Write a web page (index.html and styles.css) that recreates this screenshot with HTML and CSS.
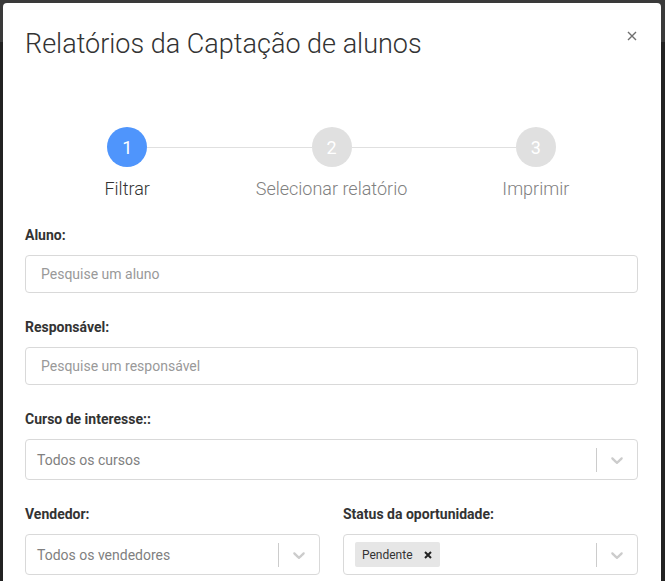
FILE: index.html
```html
<!DOCTYPE html>
<html lang="pt-BR">
<head>
<meta charset="utf-8">
<title>Relatórios da Captação de alunos</title>
<link rel="stylesheet" href="styles.css">
</head>
<body>
<div class="modal">
  <div class="modal-header">
    <h1 class="modal-title">Relatórios da Captação de alunos</h1>
    <button class="close" aria-label="Fechar">
      <svg width="10" height="10" viewBox="0 0 10 10"><path d="M1 1L9 9M9 1L1 9" stroke="#6f6f6f" stroke-width="1.4" fill="none"/></svg>
    </button>
  </div>

  <div class="stepper">
    <div class="step-track">
      <span class="circle active">1</span>
      <span class="line"></span>
      <span class="circle">2</span>
      <span class="line"></span>
      <span class="circle">3</span>
    </div>
    <div class="step-labels">
      <span class="step-label active">Filtrar</span>
      <span class="step-label">Selecionar relatório</span>
      <span class="step-label">Imprimir</span>
    </div>
  </div>

  <form class="form">
    <div class="group">
      <label class="label">Aluno:</label>
      <div class="input"><span class="placeholder">Pesquise um aluno</span></div>
    </div>
    <div class="group">
      <label class="label">Responsável:</label>
      <div class="input"><span class="placeholder">Pesquise um responsável</span></div>
    </div>
    <div class="group">
      <label class="label">Curso de interesse::</label>
      <div class="select">
        <div class="value"><span class="sel-placeholder">Todos os cursos</span></div>
        <span class="sep"></span>
        <span class="indicator"><svg width="20" height="20" viewBox="0 0 20 20"><path fill="#cccccc" d="M4.516 7.548c0.436-0.446 1.043-0.481 1.576 0l3.908 3.747 3.908-3.747c0.533-0.481 1.141-0.446 1.574 0 0.436 0.445 0.408 1.197 0 1.615-0.406 0.418-4.695 4.502-4.695 4.502-0.217 0.223-0.502 0.335-0.787 0.335s-0.57-0.112-0.789-0.335c0 0-4.287-4.084-4.695-4.502s-0.436-1.17 0-1.615z"/></svg></span>
      </div>
    </div>
    <div class="row">
      <div class="group">
        <label class="label">Vendedor:</label>
        <div class="select">
          <div class="value"><span class="sel-placeholder">Todos os vendedores</span></div>
          <span class="sep"></span>
          <span class="indicator"><svg width="20" height="20" viewBox="0 0 20 20"><path fill="#cccccc" d="M4.516 7.548c0.436-0.446 1.043-0.481 1.576 0l3.908 3.747 3.908-3.747c0.533-0.481 1.141-0.446 1.574 0 0.436 0.445 0.408 1.197 0 1.615-0.406 0.418-4.695 4.502-4.695 4.502-0.217 0.223-0.502 0.335-0.787 0.335s-0.57-0.112-0.789-0.335c0 0-4.287-4.084-4.695-4.502s-0.436-1.17 0-1.615z"/></svg></span>
        </div>
      </div>
      <div class="group">
        <label class="label">Status da oportunidade:</label>
        <div class="select">
          <div class="value">
            <span class="chip"><span class="chip-label">Pendente</span><span class="chip-remove"><svg width="8" height="8" viewBox="0 0 8 8"><path d="M1 1L7 7M7 1L1 7" stroke="#222" stroke-width="2" fill="none"/></svg></span></span>
          </div>
          <span class="sep"></span>
          <span class="indicator"><svg width="20" height="20" viewBox="0 0 20 20"><path fill="#cccccc" d="M4.516 7.548c0.436-0.446 1.043-0.481 1.576 0l3.908 3.747 3.908-3.747c0.533-0.481 1.141-0.446 1.574 0 0.436 0.445 0.408 1.197 0 1.615-0.406 0.418-4.695 4.502-4.695 4.502-0.217 0.223-0.502 0.335-0.787 0.335s-0.57-0.112-0.789-0.335c0 0-4.287-4.084-4.695-4.502s-0.436-1.17 0-1.615z"/></svg></span>
        </div>
      </div>
    </div>
  </form>
</div>
</body>
</html>
```
FILE: styles.css
```css
* { box-sizing: border-box; }
html, body { margin: 0; padding: 0; }
body {
  height: 581px;
  overflow: hidden;
  font-family: Roboto, "Liberation Sans", Arial, sans-serif;
  background: linear-gradient(to bottom, #3a3a3a 0, #3a3a3a 42px, #222222 42px, #222222 100%);
  padding: 3px 4px 0 3px;
}
.modal {
  width: 658px;
  height: 620px;
  background: #ffffff;
  border-radius: 4px;
  padding: 26px 23px 0 22px;
}
.modal-header {
  display: flex;
  justify-content: space-between;
  align-items: flex-start;
}
.modal-title {
  margin: 0;
  font-size: 27px;
  line-height: 31px;
  font-weight: 300;
  color: #333333;
}
.close {
  border: 0;
  background: none;
  padding: 0;
  margin: 2px 1px 0 0;
  width: 10px;
  height: 10px;
  display: flex;
}
.stepper { margin-top: 67px; }
.step-track {
  display: flex;
  align-items: center;
  padding: 0 82.2px;
}
.circle {
  width: 40px;
  height: 40px;
  border-radius: 50%;
  background: #e0e0e0;
  color: #ffffff;
  font-size: 18px;
  display: flex;
  align-items: center;
  justify-content: center;
  flex: none;
}
.circle.active { background: #4f95fc; }
.line {
  flex: 1;
  height: 1px;
  background: #e0e0e0;
}
.step-labels {
  display: grid;
  grid-template-columns: repeat(3, 1fr);
  margin-top: 11px;
}
.step-label {
  text-align: center;
  font-size: 18px;
  line-height: 21px;
  font-weight: 300;
  color: #808080;
}
.step-label.active { color: #333333; }
.form { margin-top: 26px; }
.group { margin-bottom: 24px; }
.label {
  display: block;
  font-size: 14px;
  line-height: 20px;
  font-weight: 700;
  color: #333333;
  margin-bottom: 10px;
}
.input {
  height: 38px;
  border: 1px solid #d9d9d9;
  border-radius: 4px;
  padding: 0 15px;
  display: flex;
  align-items: center;
}
.placeholder {
  font-size: 14px;
  color: #999999;
}
.select {
  height: 41px;
  border: 1px solid #d9d9d9;
  border-radius: 4px;
  display: flex;
  align-items: center;
}
.value {
  flex: 1;
  padding: 0 11px;
  display: flex;
  align-items: center;
}
.sel-placeholder {
  font-size: 14px;
  color: #808080;
}
.sep {
  width: 1px;
  height: 24px;
  background: #cccccc;
}
.indicator {
  width: 40px;
  display: flex;
  justify-content: center;
  align-items: center;
}
.row {
  display: grid;
  grid-template-columns: 1fr 1fr;
  column-gap: 23px;
}
.chip {
  display: flex;
  align-items: center;
  height: 25px;
  background: #e6e6e6;
  border-radius: 2px;
}
.chip-label {
  font-size: 12px;
  color: #333333;
  padding: 0 9px 0 7px;
}
.chip-remove {
  display: flex;
  padding: 0 8px 0 2px;
}
```
